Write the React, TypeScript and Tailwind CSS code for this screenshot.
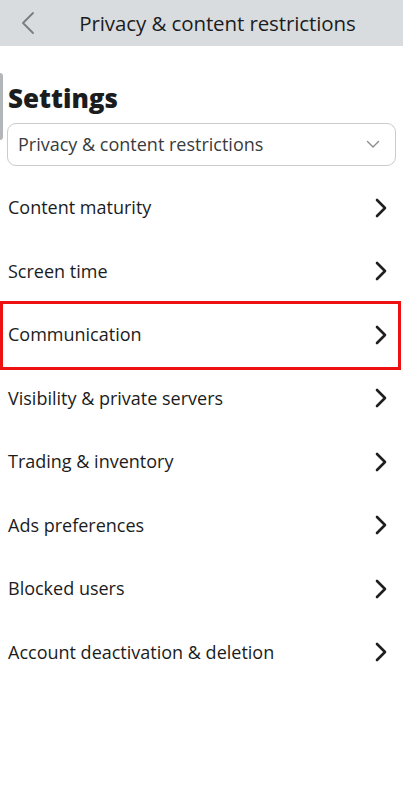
import React from 'react';

const items = [
  'Content maturity',
  'Screen time',
  'Communication',
  'Visibility & private servers',
  'Trading & inventory',
  'Ads preferences',
  'Blocked users',
  'Account deactivation & deletion',
];

const ChevronRight = () => (
  <svg width="14" height="20" viewBox="0 0 14 20" fill="none" className="shrink-0">
    <path d="M3 2 L11 10 L3 18" stroke="#1f1f1f" strokeWidth="2.6" strokeLinecap="round" strokeLinejoin="round" />
  </svg>
);

export default function App() {
  return (
    <div className="w-[403px] h-[793px] bg-white relative overflow-hidden" style={{ fontFamily: '"Open Sans", sans-serif' }}>
      {/* Header */}
      <div className="h-[46px] bg-[#d9dcdf] flex items-center relative">
        <svg width="14" height="24" viewBox="0 0 14 24" fill="none" className="absolute left-[21px] top-[11px]">
          <path d="M12 2 L2 12 L12 22" stroke="#7a7c7e" strokeWidth="1.8" strokeLinecap="round" strokeLinejoin="round" />
        </svg>
        <div className="w-full text-center pl-[32px] text-[20.5px] text-[#1b1c1d] tracking-[-0.1px]">Privacy &amp; content restrictions</div>
      </div>

      {/* scroll indicator */}
      <div className="absolute left-0 top-[73px] w-[3px] h-[67px] bg-[#b3b6b9] rounded-r" />

      <div className="pt-[36px] px-[7px]">
        <h1 className="text-[26px] leading-[32px] font-extrabold text-[#1b1c1d] pl-[1px]">Settings</h1>
        <div className="mt-[9px] h-[43px] border border-[#c9cbcd] rounded-[9px] flex items-center justify-between pl-[10px] pr-[15px]">
          <span className="text-[18px] text-[#393b3d]">Privacy &amp; content restrictions</span>
          <svg width="14" height="9" viewBox="0 0 14 9" fill="none">
            <path d="M1.5 1.5 L7 7 L12.5 1.5" stroke="#8a8c8e" strokeWidth="1.4" strokeLinecap="round" strokeLinejoin="round" />
          </svg>
        </div>
      </div>

      <div className="mt-[10px]">
        {items.map((item) => (
          <div key={item} className="relative h-[63.5px] flex items-center justify-between pl-[8px] pr-[15px]">
            <span className="text-[18px] text-[#1b1c1d]">{item}</span>
            <ChevronRight />
            {item === 'Communication' && (
              <div className="absolute left-0 right-[2px] -top-[2px] -bottom-[3px] border-[3px] border-[#ee1111]" />
            )}
          </div>
        ))}
      </div>
    </div>
  );
}
